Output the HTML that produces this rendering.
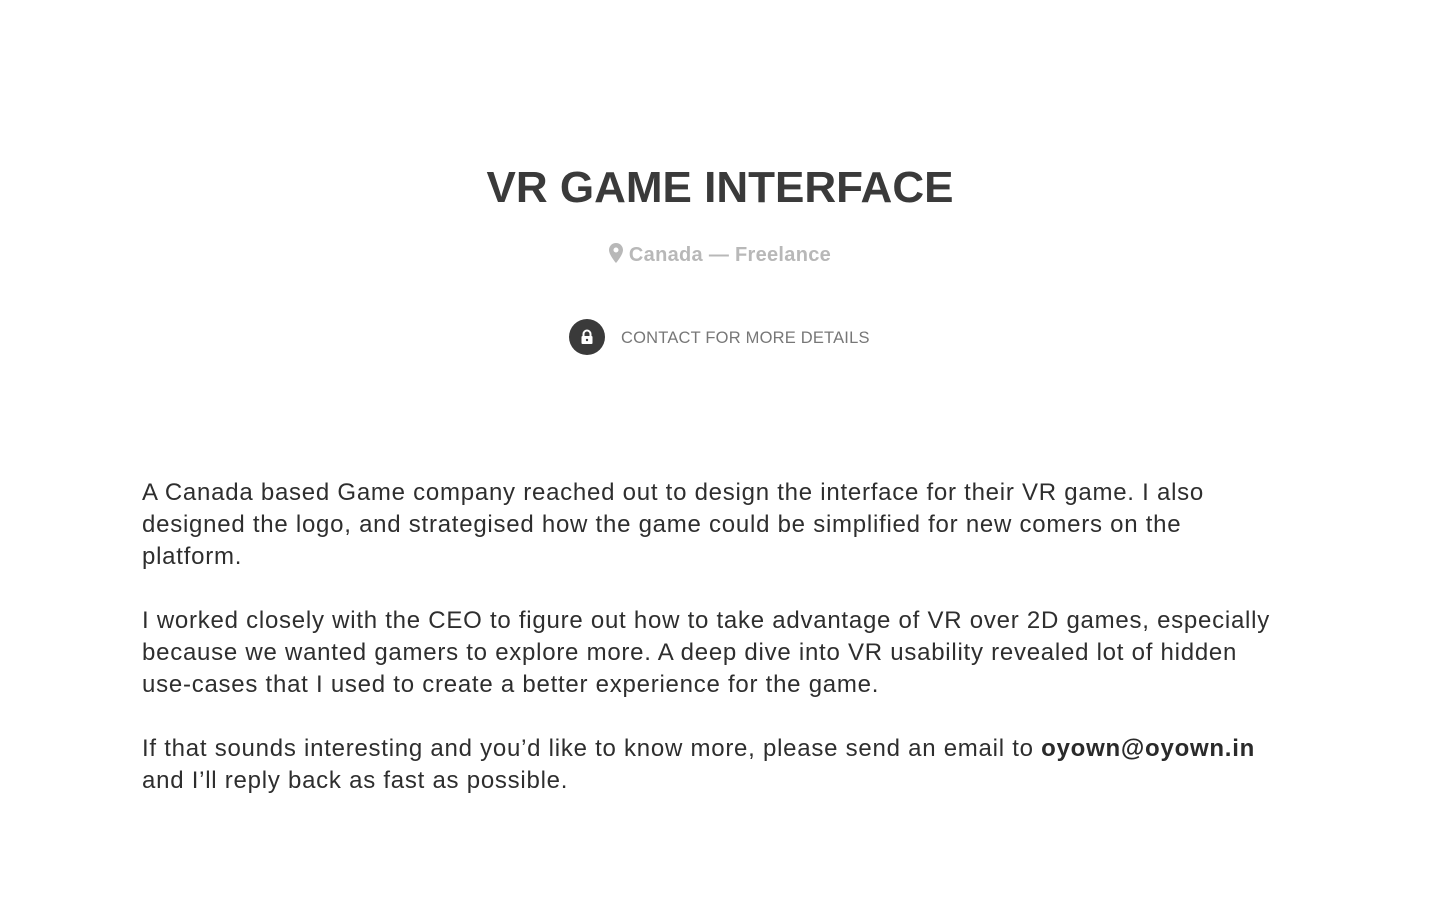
<!DOCTYPE html>
<html><head><meta charset="utf-8"><style>
body{margin:0;background:#fff;font-family:"Liberation Sans",sans-serif;width:1440px;height:900px;overflow:hidden}
h1{position:absolute;top:163px;left:0;width:1440px;text-align:center;margin:0;font-size:44px;font-weight:bold;letter-spacing:0;color:#3a3a3a;line-height:50px}
.loc{position:absolute;top:242px;left:0;width:1440px;text-align:center;font-size:20px;font-weight:bold;color:#b8b8b8;line-height:26px;letter-spacing:.3px}
.ct{position:absolute;top:319px;left:569px;display:flex;align-items:center}
.ct .c{width:36px;height:36px;border-radius:50%;background:#3a3a3a;display:flex;align-items:center;justify-content:center}
.ct span{margin-left:16px;font-size:16.5px;color:#777;letter-spacing:.2px;position:relative;top:1px}
.p{position:absolute;left:142px;width:1200px;font-size:24px;letter-spacing:.75px;line-height:32px;color:#2e2e2e;white-space:nowrap}
b{color:#2a2a2a}
</style></head><body>
<h1>VR GAME INTERFACE</h1>
<div class="loc"><svg width="14" height="20" viewBox="0 0 14 20" style="vertical-align:-2px;margin-right:6px"><path d="M7 0C3.1 0 0 3.1 0 7c0 5 7 13 7 13s7-8 7-13C14 3.1 10.9 0 7 0zm0 9.5A2.5 2.5 0 1 1 7 4.5a2.5 2.5 0 0 1 0 5z" fill="#b8b8b8"/></svg>Canada — Freelance</div>
<div class="ct"><div class="c"><svg width="14" height="16" viewBox="0 0 14 16"><path d="M3.5 7V5a3.5 3.5 0 0 1 7 0v2" stroke="#fff" stroke-width="2" fill="none"/><rect x="1.5" y="7" width="11" height="8" rx="1" fill="#fff"/><circle cx="7" cy="11" r="1.2" fill="#3a3a3a"/></svg></div><span>CONTACT FOR MORE DETAILS</span></div>
<div class="p" style="top:477px">A Canada based Game company reached out to design the interface for their VR game. I also<br>designed the logo, and strategised how the game could be simplified for new comers on the<br>platform.</div>
<div class="p" style="top:605px">I worked closely with the CEO to figure out how to take advantage of VR over 2D games, especially<br>because we wanted gamers to explore more. A deep dive into VR usability revealed lot of hidden<br>use-cases that I used to create a better experience for the game.</div>
<div class="p" style="top:733px">If that sounds interesting and you’d like to know more, please send an email to <b>oyown@oyown.in</b><br>and I’ll reply back as fast as possible.</div>
</body></html>
